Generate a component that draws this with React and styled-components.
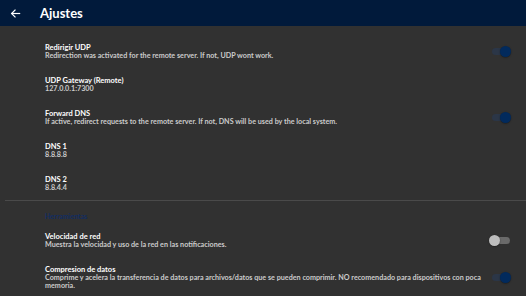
import styled, { createGlobalStyle } from 'styled-components';
import { useState } from 'react';

const Global = createGlobalStyle`
  html, body {
    margin: 0;
    padding: 0;
    background: #313131;
    font-family: Lato, "Liberation Sans", sans-serif;
    overflow: hidden;
  }
`;

const Page = styled.div`
  width: 526px;
  height: 296px;
  display: flex;
  flex-direction: column;
  background: #313131;
`;

const Toolbar = styled.header`
  height: 26px;
  flex: 0 0 26px;
  background: #011a3b;
  display: flex;
  align-items: center;
  padding-left: 10px;
  gap: 19px;
`;

const BackButton = styled.button`
  border: none;
  background: none;
  padding: 0;
  width: 11px;
  height: 11px;
  display: flex;
  align-items: center;
  justify-content: center;
  cursor: pointer;
`;

const Title = styled.h1`
  margin: 0;
  color: #ffffff;
  font-size: 13px;
  font-weight: 700;
`;

const List = styled.div`
  padding-top: 8.5px;
  display: flex;
  flex-direction: column;
`;

const Row = styled.div`
  display: flex;
  align-items: center;
  justify-content: space-between;
  padding: 8px 16px 8px 45px;
  min-height: 17px;
`;

const Texts = styled.div`
  display: flex;
  flex-direction: column;
  max-width: 440px;
`;

const RowTitle = styled.div`
  color: #ffffff;
  font-size: 7.5px;
  font-weight: 700;
  line-height: 9px;
`;

const RowSub = styled.div`
  color: #cbcbcb;
  font-size: 7.2px;
  font-weight: 700;
  line-height: 8px;
`;

const Divider = styled.hr`
  margin: 0 0 0 5px;
  border: none;
  border-top: 1px solid #4a4a4a;
`;

const Section = styled.div`
  padding: 11px 0 3px 45px;
  color: #112d62;
  font-size: 7px;
  font-weight: 700;
  line-height: 9px;
`;

const Track = styled.div`
  position: relative;
  width: 18px;
  height: 7px;
  border-radius: 4px;
  background: ${(p) => (p.$on ? '#2b3647' : '#6a6a6a')};
  cursor: pointer;
  flex: 0 0 auto;
`;

const Thumb = styled.div`
  position: absolute;
  top: 50%;
  left: ${(p) => (p.$on ? '8px' : '-3px')};
  width: 11px;
  height: 11px;
  margin-top: -5.5px;
  border-radius: 50%;
  background: ${(p) => (p.$on ? '#022a5c' : '#bdbdbd')};
  box-shadow: 0 0.5px 1.5px rgba(0, 0, 0, 0.5);
`;

function Toggle({ on, onChange }) {
  return (
    <Track $on={on} onClick={onChange}>
      <Thumb $on={on} />
    </Track>
  );
}

function Item({ title, sub, toggle, onToggle }) {
  return (
    <Row>
      <Texts>
        <RowTitle>{title}</RowTitle>
        <RowSub>{sub}</RowSub>
      </Texts>
      {toggle !== undefined && <Toggle on={toggle} onChange={onToggle} />}
    </Row>
  );
}

export default function App() {
  const [flags, setFlags] = useState({
    udp: true,
    dns: true,
    speed: false,
    compress: true,
  });

  const flip = (key) => () => setFlags({ ...flags, [key]: !flags[key] });

  return (
    <Page>
      <Global />
      <Toolbar>
        <BackButton aria-label="Volver">
          <svg width="11" height="11" viewBox="0 0 24 24" fill="none" stroke="#fff" strokeWidth="2.6" strokeLinecap="square">
            <path d="M21 12H4" />
            <path d="M11 4.5 3.5 12l7.5 7.5" />
          </svg>
        </BackButton>
        <Title>Ajustes</Title>
      </Toolbar>
      <List>
        <Item
          title="Redirigir UDP"
          sub="Redirection was activated for the remote server. If not, UDP wont work."
          toggle={flags.udp}
          onToggle={flip('udp')}
        />
        <Item title="UDP Gateway (Remote)" sub="127.0.0.1:7300" />
        <Item
          title="Forward DNS"
          sub="If active, redirect requests to the remote server. If not, DNS will be used by the local system."
          toggle={flags.dns}
          onToggle={flip('dns')}
        />
        <Item title="DNS 1" sub="8.8.8.8" />
        <Item title="DNS 2" sub="8.8.4.4" />
        <Divider />
        <Section>Herramientas</Section>
        <Item
          title="Velocidad de red"
          sub="Muestra la velocidad y uso de la red en las notificaciones."
          toggle={flags.speed}
          onToggle={flip('speed')}
        />
        <Item
          title="Compresion de datos"
          sub="Comprime y acelera la transferencia de datos para archivos/datos que se pueden comprimir. NO recomendado para dispositivos con poca memoria."
          toggle={flags.compress}
          onToggle={flip('compress')}
        />
      </List>
    </Page>
  );
}
